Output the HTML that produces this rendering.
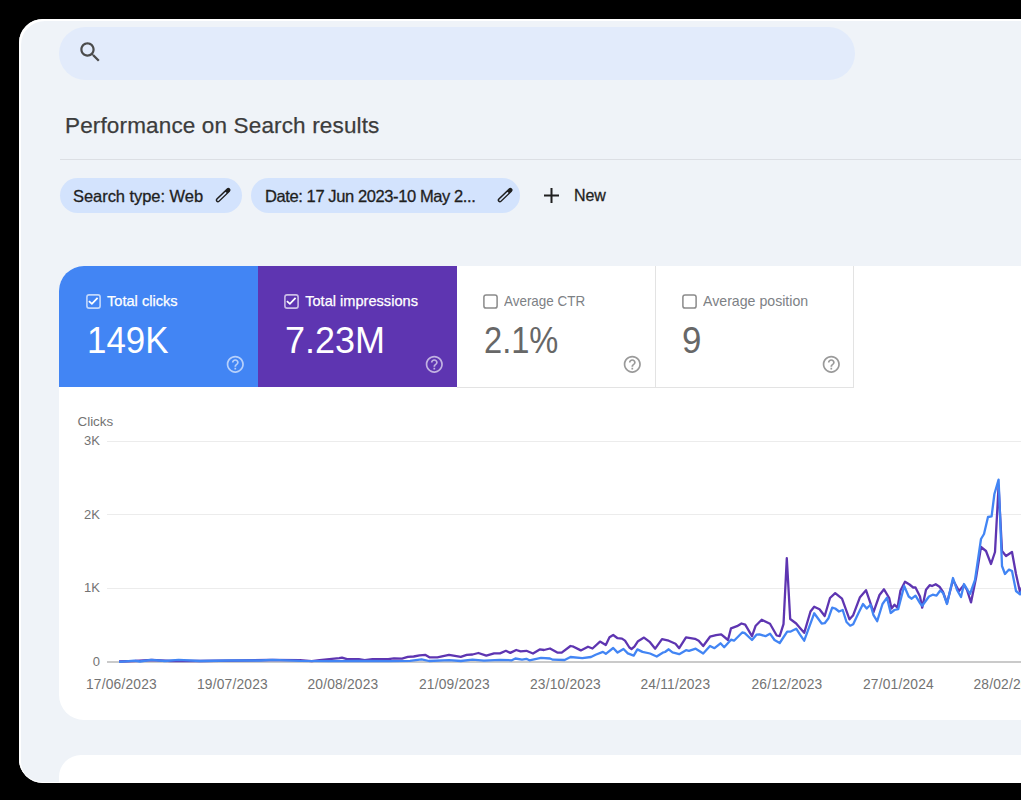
<!DOCTYPE html>
<html><head><meta charset="utf-8">
<style>
html,body{margin:0;padding:0;}
body{width:1021px;height:800px;background:#000;overflow:hidden;position:relative;font-family:"Liberation Sans",sans-serif;}
.abs{position:absolute;}
#panel{position:absolute;left:19px;top:19px;width:1100px;height:764px;background:#eff3f8;border-radius:24px;box-shadow:inset 2px 2px 0 #fff, inset 0 -1px 0 #fff;overflow:hidden;}
#search{position:absolute;left:59px;top:27px;width:796px;height:53px;border-radius:27px;background:#e2ebfb;}
#title{position:absolute;left:65px;top:113px;font-size:22.5px;letter-spacing:0.15px;color:#3c3c3c;white-space:nowrap;line-height:26px;-webkit-text-stroke:0.25px #3c3c3c;}
#divider{position:absolute;left:60px;top:159px;width:1000px;height:1px;background:#dcdfe4;}
.chip{position:absolute;top:178px;height:35px;border-radius:18px;background:#d3e3fd;}
.chiptxt{position:absolute;font-size:16.5px;letter-spacing:-0.05px;color:#1f1f1f;white-space:nowrap;line-height:18px;top:186.6px;-webkit-text-stroke:0.3px #1f1f1f;}
#cards{position:absolute;left:59px;top:266px;width:1000px;height:454px;background:#fff;border-radius:25px 0 0 25px;overflow:hidden;}
.card{position:absolute;top:0;height:121px;}
.cl{position:absolute;top:27px;font-size:14.6px;white-space:nowrap;line-height:16px;}
.cv{position:absolute;top:55px;font-size:37.5px;white-space:nowrap;line-height:40px;transform-origin:0 0;transform:scaleX(0.93);}
.cb{position:absolute;top:28px;left:27px;width:11px;height:11px;border-radius:2px;}
.help{position:absolute;top:89px;width:20px;height:20px;}
.grid{position:absolute;left:107px;width:1000px;height:1px;background:#ececec;}
.yl{position:absolute;font-size:13px;color:#737373;line-height:14px;white-space:nowrap;text-align:right;}
.xl{position:absolute;top:677px;font-size:13.8px;letter-spacing:0.18px;color:#737373;line-height:16px;white-space:nowrap;}
#bottom{position:absolute;left:59px;top:755px;width:1000px;height:28px;background:#fff;border-radius:22px 0 0 0;}
</style></head>
<body>
<div id="panel"></div>
<div id="search"></div>
<svg class="abs" style="left:77.2px;top:39.4px" width="26.5" height="26.5" viewBox="0 0 24 24"><path fill="#4b4b4b" d="M15.5 14h-.79l-.28-.27C15.41 12.59 16 11.11 16 9.5 16 5.91 13.09 3 9.5 3S3 5.91 3 9.5 5.91 16 9.5 16c1.61 0 3.09-.59 4.23-1.57l.27.28v.79l5 4.99L20.49 19l-4.99-5zm-6 0C7.01 14 5 11.99 5 9.5S7.01 5 9.5 5 14 7.01 14 9.5 11.99 14 9.5 14z"/></svg>
<div id="title">Performance on Search results</div>
<div id="divider"></div>

<div class="chip" style="left:60px;width:182px"></div>
<div class="chiptxt" style="left:73px">Search type: Web</div>
<div class="chip" style="left:251px;width:269px"></div>
<div class="chiptxt" style="left:265px;letter-spacing:-0.4px">Date: 17 Jun 2023-10 May 2...</div>
<div class="abs" style="left:574px;top:187px;font-size:16px;color:#1f1f1f;line-height:18px;letter-spacing:-0.1px;-webkit-text-stroke:0.3px #1f1f1f">New</div>


<svg class="abs" style="left:543px;top:187px" width="17" height="17" viewBox="0 0 17 17"><path d="M8.5 1v15M1 8.5h15" stroke="#1f1f1f" stroke-width="2"/></svg>
<svg class="abs" style="left:208px;top:180px" width="30" height="30" viewBox="0 0 30 30"><path d="M9.9 20.2 L20.3 10.1" stroke="#1f1f1f" stroke-width="4.4" stroke-linecap="round"/><path d="M10.0 20.1 L17.6 12.8" stroke="#d3e3fd" stroke-width="1.6" stroke-linecap="round"/></svg>
<svg class="abs" style="left:490px;top:180px" width="30" height="30" viewBox="0 0 30 30"><path d="M9.9 20.2 L20.3 10.1" stroke="#1f1f1f" stroke-width="4.4" stroke-linecap="round"/><path d="M10.0 20.1 L17.6 12.8" stroke="#d3e3fd" stroke-width="1.6" stroke-linecap="round"/></svg>
<div id="cards">
  <div class="card" style="left:0;width:199px;background:#4285f4">
    <svg class="abs" style="left:27px;top:28px" width="15" height="15" viewBox="0 0 15 15"><rect x="0.9" y="0.9" width="13.2" height="13.2" rx="2.2" fill="none" stroke="rgba(255,255,255,0.68)" stroke-width="1.6"/><path d="M2.9 7.1 L5.9 9.8 L11.6 3.9" fill="none" stroke="#fff" stroke-width="1.8"/></svg>
    <div class="cl" style="left:48px;color:#fff;-webkit-text-stroke:0.25px #fff">Total clicks</div>
    <div class="cv" style="left:28px;top:54px;color:#fff">149K</div>
    <svg class="abs" style="left:166.1px;top:88.1px" width="20.6" height="20.6" viewBox="0 0 24 24"><path fill="rgba(255,255,255,0.62)" d="M11 18h2v-2h-2v2zm1-16C6.48 2 2 6.48 2 12s4.48 10 10 10 10-4.48 10-10S17.52 2 12 2zm0 18c-4.41 0-8-3.59-8-8s3.59-8 8-8 8 3.59 8 8-3.59 8-8 8zm0-14c-2.21 0-4 1.79-4 4h2c0-1.1.9-2 2-2s2 .9 2 2c0 2-3 1.75-3 5h2c0-2.25 3-2.5 3-5 0-2.21-1.79-4-4-4z"/></svg>
  </div>
  <div class="card" style="left:199px;width:199px;background:#5e35b1">
    <svg class="abs" style="left:26.3px;top:28px" width="15" height="15" viewBox="0 0 15 15"><rect x="0.9" y="0.9" width="13.2" height="13.2" rx="2.2" fill="none" stroke="rgba(255,255,255,0.68)" stroke-width="1.6"/><path d="M2.9 7.1 L5.9 9.8 L11.6 3.9" fill="none" stroke="#fff" stroke-width="1.8"/></svg>
    <div class="cl" style="left:47.2px;color:#fff;-webkit-text-stroke:0.25px #fff">Total impressions</div>
    <div class="cv" style="left:27px;top:54px;color:#fff;transform:scaleX(0.96)">7.23M</div>
    <svg class="abs" style="left:166.1px;top:88.1px" width="20.6" height="20.6" viewBox="0 0 24 24"><path fill="rgba(255,255,255,0.62)" d="M11 18h2v-2h-2v2zm1-16C6.48 2 2 6.48 2 12s4.48 10 10 10 10-4.48 10-10S17.52 2 12 2zm0 18c-4.41 0-8-3.59-8-8s3.59-8 8-8 8 3.59 8 8-3.59 8-8 8zm0-14c-2.21 0-4 1.79-4 4h2c0-1.1.9-2 2-2s2 .9 2 2c0 2-3 1.75-3 5h2c0-2.25 3-2.5 3-5 0-2.21-1.79-4-4-4z"/></svg>
  </div>
  <div class="card" style="left:398px;width:198px;border-right:1px solid #e3e3e3;border-bottom:1px solid #e3e3e3">
    <svg class="abs" style="left:26px;top:28px" width="15" height="15" viewBox="0 0 15 15"><rect x="0.9" y="0.9" width="13.2" height="13.2" rx="2.2" fill="none" stroke="#8a8a8a" stroke-width="1.5"/></svg>
    <div class="cl" style="left:47px;color:#7d8185;transform-origin:0 0;transform:scaleX(0.92)">Average CTR</div>
    <div class="cv" style="left:27px;top:54px;color:#676767;transform:scaleX(0.87)">2.1%</div>
    <svg class="abs" style="left:165.1px;top:88.1px" width="20.6" height="20.6" viewBox="0 0 24 24"><path fill="#9a9a9a" d="M11 18h2v-2h-2v2zm1-16C6.48 2 2 6.48 2 12s4.48 10 10 10 10-4.48 10-10S17.52 2 12 2zm0 18c-4.41 0-8-3.59-8-8s3.59-8 8-8 8 3.59 8 8-3.59 8-8 8zm0-14c-2.21 0-4 1.79-4 4h2c0-1.1.9-2 2-2s2 .9 2 2c0 2-3 1.75-3 5h2c0-2.25 3-2.5 3-5 0-2.21-1.79-4-4-4z"/></svg>
  </div>
  <div class="card" style="left:596px;width:198px;border-right:1px solid #e3e3e3;border-bottom:1px solid #e3e3e3">
    <svg class="abs" style="left:27px;top:28px" width="15" height="15" viewBox="0 0 15 15"><rect x="0.9" y="0.9" width="13.2" height="13.2" rx="2.2" fill="none" stroke="#8a8a8a" stroke-width="1.5"/></svg>
    <div class="cl" style="left:48px;color:#7d8185;transform-origin:0 0;transform:scaleX(0.97)">Average position</div>
    <div class="cv" style="left:26.5px;top:54px;color:#676767">9</div>
    <svg class="abs" style="left:166.1px;top:88.1px" width="20.6" height="20.6" viewBox="0 0 24 24"><path fill="#9a9a9a" d="M11 18h2v-2h-2v2zm1-16C6.48 2 2 6.48 2 12s4.48 10 10 10 10-4.48 10-10S17.52 2 12 2zm0 18c-4.41 0-8-3.59-8-8s3.59-8 8-8 8 3.59 8 8-3.59 8-8 8zm0-14c-2.21 0-4 1.79-4 4h2c0-1.1.9-2 2-2s2 .9 2 2c0 2-3 1.75-3 5h2c0-2.25 3-2.5 3-5 0-2.21-1.79-4-4-4z"/></svg>
  </div>
</div>


<div class="yl" style="left:77.5px;top:415px;text-align:left;font-size:13.4px">Clicks</div>
<div class="grid" style="top:441px"></div>
<div class="grid" style="top:514px"></div>
<div class="grid" style="top:588px"></div>
<div class="abs" style="left:107px;top:661px;width:1000px;height:2px;background:#cacaca"></div>
<div class="yl" style="left:60px;width:40px;top:434px">3K</div>
<div class="yl" style="left:60px;width:40px;top:508px">2K</div>
<div class="yl" style="left:60px;width:40px;top:581px">1K</div>
<div class="yl" style="left:60px;width:40px;top:655px">0</div>
<div class="xl" style="left:86px">17/06/2023</div>
<div class="xl" style="left:197px">19/07/2023</div>
<div class="xl" style="left:307.5px">20/08/2023</div>
<div class="xl" style="left:419px">21/09/2023</div>
<div class="xl" style="left:530px">23/10/2023</div>
<div class="xl" style="left:640.5px">24/11/2023</div>
<div class="xl" style="left:751.5px">26/12/2023</div>
<div class="xl" style="left:863px">27/01/2024</div>
<div class="xl" style="left:973.5px">28/02/2024</div>
<svg class="abs" style="left:0;top:0" width="1021" height="800" viewBox="0 0 1021 800"><polyline fill="none" stroke="#5e35b1" stroke-width="2.3" stroke-linejoin="round" points="119,661.5 135,661 152,660 170,661 200,661 240,660.5 270,660 300,660.2 311.8,661.2 319.6,660.2 329.4,659.2 339.2,658.2 342,657.6 347,659.2 358.8,659.2 364.7,660.2 372.5,659.2 388.2,659.2 394,658.4 402,658.6 407.8,656.9 413.7,656.5 419.6,655.3 425.5,654.9 429.4,657.3 437.3,657.3 449,654.9 460.8,656.9 466.7,654.9 472.5,654.5 478.4,653 486.3,655.7 494.1,653.3 500,653.4 505.9,650.8 510.3,652.9 516.2,650 520.6,651.4 526.4,650.8 533,653.5 539.7,649.4 544,650 550,648.5 557.3,652.6 561.7,652.6 570.5,646 573.5,646.7 580.8,650.4 588,646.7 592.5,648.5 600,641.6 605.8,645 609.5,637.2 613.2,635 617.6,638.2 622,638.6 625,640.6 629.4,647.5 631.5,649 634.4,646.7 638,641.2 644,637.6 650,642.2 655.2,648.7 662,639.2 668.7,640.7 675.5,643.7 679.2,648.2 686,637.3 695,638.8 698.7,640.7 703.2,646 710,636.7 716,635.2 721.2,634.3 728,640 731,628.3 737,626.2 741.5,623.5 745.2,624.7 752,636.2 755.7,625.7 761.7,619.7 770,623.8 776.7,635.5 779.7,636.2 783.5,624.2 786.8,558.2 790.2,619 796.2,623.5 800,628 804.2,632.8 810.5,611.5 814.2,606.7 819.5,609.2 824.7,616 830,598 835.2,593.2 842,598.7 849.5,619.3 853.2,615.2 860,597.2 866,590.2 873.5,612.2 879.5,595 884,589.3 889.2,598 891.5,608.5 894.5,604.7 897.5,607.7 900.5,590.5 905,581.8 909.5,584.5 913.2,587.5 915.5,587.5 920,596.5 922.2,607.7 926,589.7 929.7,585.2 932,586 935.7,584.2 939.5,586.7 943,592 947,603 953,580 959,591 964,585 967,590 971,602.4 976,578 981,547 986,551 991,564 995,552 998.6,486 1002,551 1006,556 1012,552 1016,574 1020,592 1025,580"/>
<polyline fill="none" stroke="#4285f4" stroke-width="2.3" stroke-linejoin="round" points="119,661.8 134.5,660.6 140,661.5 151,659.8 165,661 178.6,659.8 200,661 230,660.5 260,660.5 272.7,659.8 300,660.8 330,661.2 360,661 390,661.2 410,660.8 421.6,659.4 429,661 449,660.2 460.8,661 472.5,659.6 484,660.6 500,659.8 511.8,660.3 515.4,658.5 522,659.7 526.4,658.8 529.4,660.3 541,657.8 550,658.5 552.9,659.7 564.6,660 570.5,657 582.3,658.2 591,657 595.6,654.8 602.9,651.9 605.8,653.8 613.2,648 617.6,652.6 623.5,649 627.8,653.4 633.7,655.6 637.4,649.4 642.5,651.9 650,653.5 656.7,656.5 662.7,652.7 665,652 668.7,649.3 672.5,652.3 679.2,654.2 686,650.2 689,650.8 695.7,648.7 703.2,653.5 710,646 714.5,648.2 720.5,643.3 724.2,647.2 731,639.7 734,640.7 742.2,632.5 744.5,632.8 752,640 756.5,634.7 759.5,634.3 765.5,636.2 770,633.7 774.5,640 779.7,643 787.2,631.7 790.2,631.7 796.2,628.7 800,634.7 804.2,640.7 814.2,613.3 821.7,623.5 824.7,623.2 828.5,618.2 832.2,607.7 835.2,608.5 839,611.5 842.7,610 846.5,622 850.2,625.7 853.2,624.2 858.5,613 863,604 866.7,608.5 870.5,604.7 873.5,615.2 877.2,621.2 882.5,604 887,597.7 890.7,613 894.5,610 898.2,609.2 904.2,586 908.7,596.5 911.7,598.7 915.5,595.7 920,603.2 922.2,605.8 929,596.5 932.7,594.7 936.5,595.7 940.2,590.5 943.2,593.2 947,604 953,578 957,590 961,597 964,584 970,594 975,580 981,539 984,534 988,517 991.6,516.4 994.4,494 998.6,479.6 1002,566 1005,574 1009,569.6 1012,571 1016,591 1020,594.4 1025,585"/>
</svg>
<div id="bottom"></div>
</body></html>
